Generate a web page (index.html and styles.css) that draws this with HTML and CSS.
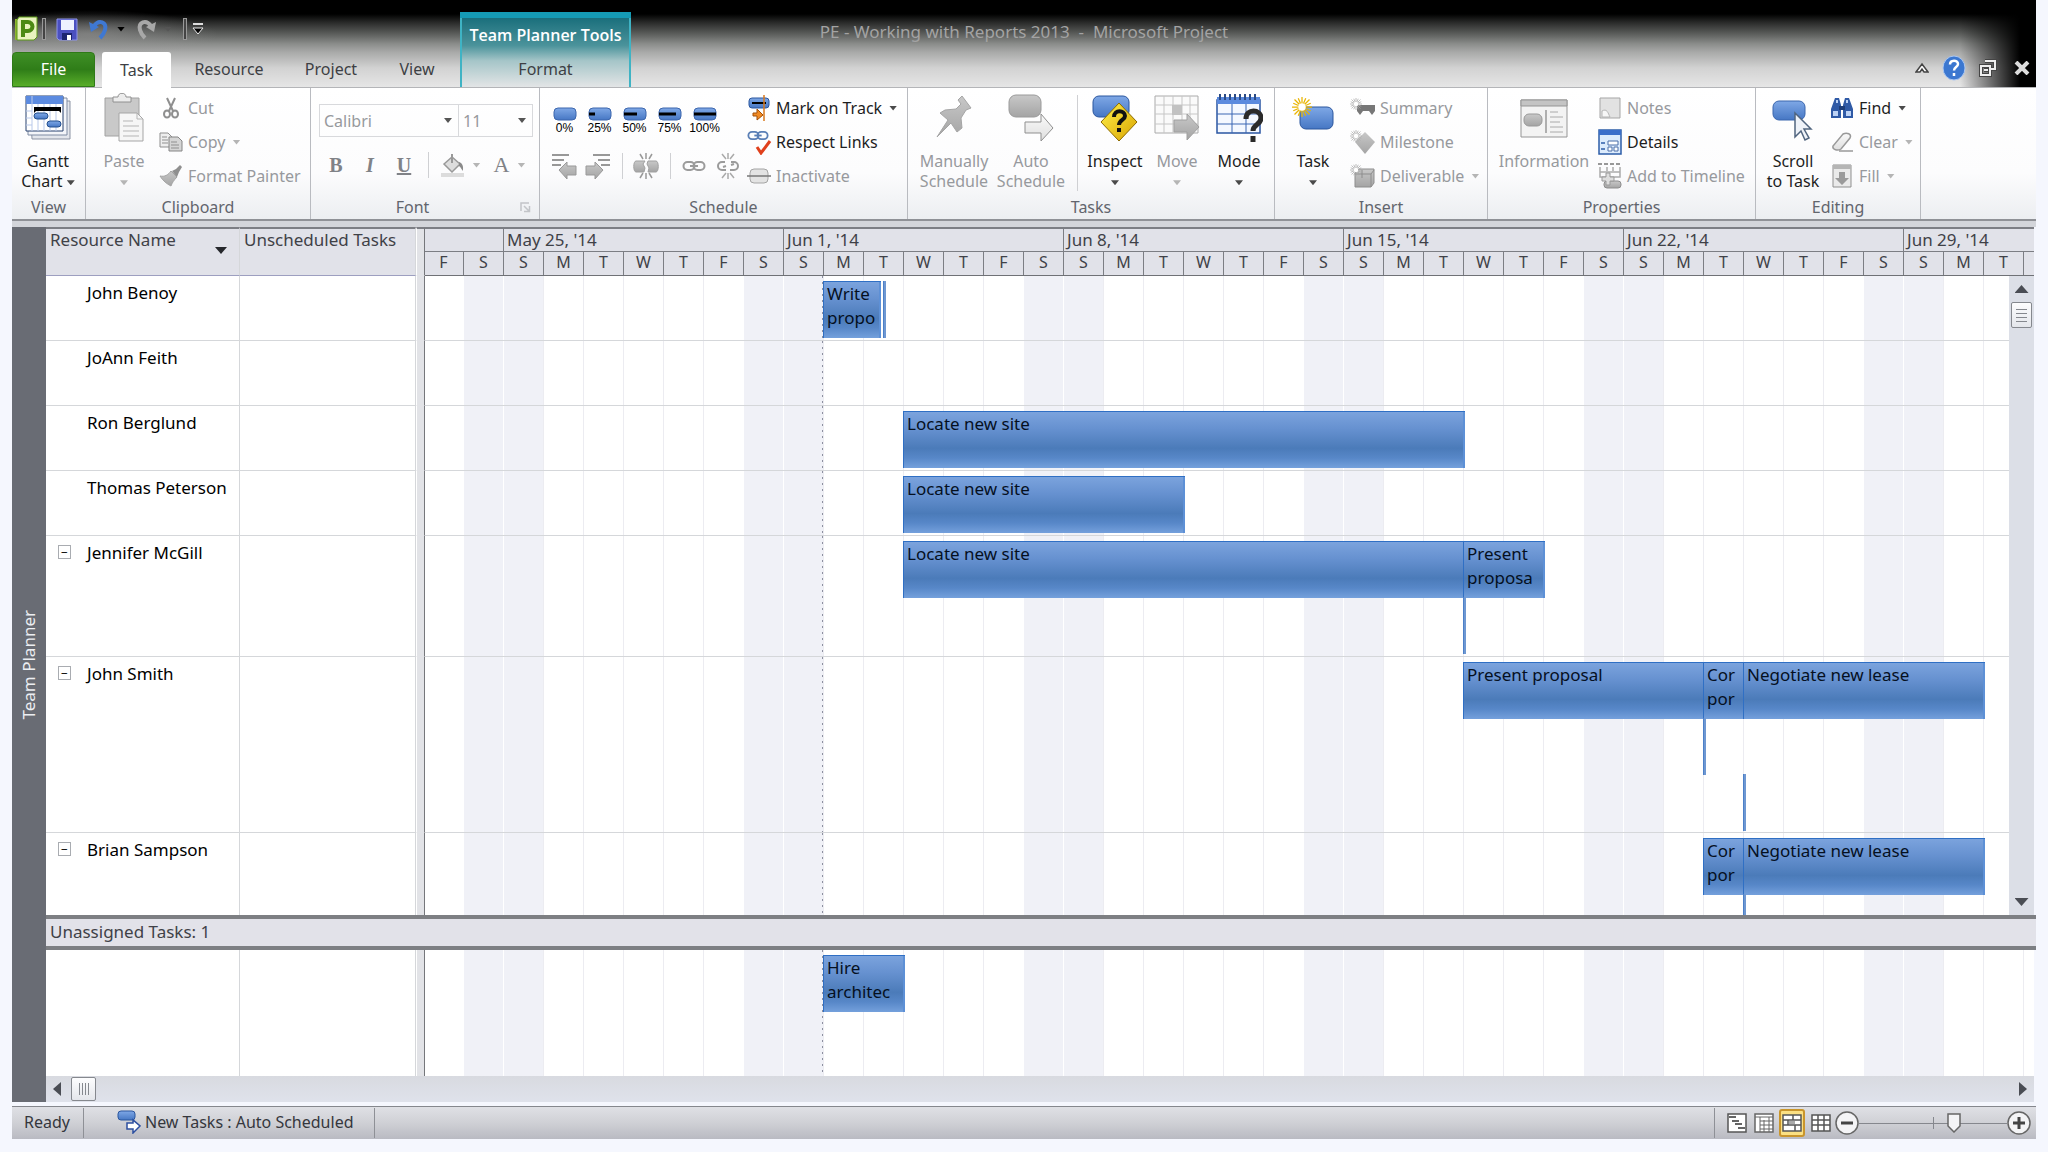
FILE: index.html
```html
<!DOCTYPE html>
<html lang="en">
<head>
<meta charset="utf-8">
<title>PE - Working with Reports 2013 - Microsoft Project</title>
<link rel="stylesheet" href="styles.css">
</head>
<body>
<svg class="defs" aria-hidden="true">
  <defs>
    <linearGradient id="blue" x1="0" y1="0" x2="0" y2="1"><stop offset="0" stop-color="#7fa8e6"/><stop offset="1" stop-color="#4677c4"/></linearGradient>
    <linearGradient id="grey" x1="0" y1="0" x2="0" y2="1"><stop offset="0" stop-color="#c8c8c8"/><stop offset="1" stop-color="#a4a4a4"/></linearGradient>
    <linearGradient id="pale" x1="0" y1="0" x2="0" y2="1"><stop offset="0" stop-color="#fafafa"/><stop offset="1" stop-color="#dedede"/></linearGradient>
    <linearGradient id="gold" x1="0" y1="0" x2="1" y2="1"><stop offset="0" stop-color="#fff04a"/><stop offset="1" stop-color="#d9a400"/></linearGradient>
  </defs>
  <symbol id="spark" viewBox="0 0 16 16"><path d="M8 0v16M0 8h16M2 2l12 12M14 2L2 14M5 1l6 14M11 1L5 15M1 5l14 6M1 11l14-6" stroke="currentColor" stroke-width="1"/><circle cx="8" cy="8" r="3" fill="#fff"/></symbol>
  <symbol id="chain" viewBox="0 0 24 12"><rect x="1.500" y="2" width="11" height="8" rx="4" fill="none" stroke="currentColor" stroke-width="2"/><rect x="11.500" y="2" width="11" height="8" rx="4" fill="none" stroke="currentColor" stroke-width="2"/><path d="M8 6h8" stroke="currentColor" stroke-width="2"/></symbol>
</svg>

<header class="titlebar">
  <div class="quick">
    <svg width="24" height="26" viewBox="0 0 24 26"><rect x="1" y="3" width="20" height="21" fill="#8fb52f"/><path d="M5 1h18v20l-3 3H3V4z" fill="#e9f3bf" stroke="#5c9a16"/><path d="M9 21V6h5a4 4 0 0 1 0 9h-5" fill="none" stroke="#4c8a14" stroke-width="4"/></svg>
    <i class="bar"></i>
    <button aria-label="Save"><svg width="22" height="24" viewBox="0 0 22 24"><path d="M1 2h20v21H3l-2-2z" fill="#4b50c0" stroke="#8d93ea"/><path d="M5 3h13v10H5z" fill="#eef1ff"/><path d="M6 16h10v7H6z" fill="#1d2570"/><path d="M11 18h4v5h-4z" fill="#fff"/></svg></button>
    <button aria-label="Undo"><svg width="20" height="22" viewBox="0 0 20 22"><path d="M5 8C10 1 18 4 16 12c-1 4-3 6-5 8" fill="none" stroke="#3f78d2" stroke-width="4"/><path d="M0 4l2 10 8-5z" fill="#3f78d2"/></svg><i class="caret black"></i></button>
    <button aria-label="Redo"><svg width="20" height="22" viewBox="0 0 20 22"><path d="M15 8C10 1 2 4 4 12c1 4 3 6 5 8" fill="none" stroke="#a8a8a8" stroke-width="4"/><path d="M20 4l-2 10-8-5z" fill="#a8a8a8"/></svg><i class="caret dim"></i></button>
    <i class="bar"></i>
    <button aria-label="Customize Quick Access Toolbar"><svg width="12" height="12" viewBox="0 0 12 12"><path d="M1 1h10" stroke="#ddd" stroke-width="2"/><path d="M1 5h10l-5 6z" fill="#000" stroke="#eee"/></svg></button>
  </div>
  <h1 class="title">PE - Working with Reports 2013 &nbsp;-&nbsp; Microsoft Project</h1>
  <nav class="tabs">
    <button class="tab file">File</button>
    <button class="tab active">Task</button>
    <button class="tab resource">Resource</button>
    <button class="tab project">Project</button>
    <button class="tab view">View</button>
  </nav>
  <div class="context">
    <span class="context-name">Team Planner Tools</span>
    <button class="tab">Format</button>
  </div>
  <div class="controls">
    <button aria-label="Minimize the Ribbon"><svg width="14" height="12" viewBox="0 0 14 12"><path d="M1 10l6-8 6 8H9L7 7l-2 3z" fill="#fff" stroke="#444" stroke-width="1.500"/></svg></button>
    <button aria-label="Help"><svg width="24" height="26" viewBox="0 0 24 26"><ellipse cx="12" cy="13" rx="11" ry="12" fill="#3b77d0" stroke="#a9c6f2"/><path d="M8 9.500c0-5 8-5 8-.5 0 3-4 3-4 6.500M12 18v3" fill="none" stroke="#fff" stroke-width="2.500"/></svg></button>
    <button aria-label="Restore Window"><svg width="18" height="18" viewBox="0 0 18 18"><path d="M6 2h10v8h-4M2 7h9v9H2zM5 11h4" fill="none" stroke="#444" stroke-width="4"/><path d="M6 2h10v8h-4M2 7h9v9H2zM5 11h4" fill="none" stroke="#eee" stroke-width="2"/></svg></button>
    <button aria-label="Close"><svg width="16" height="14" viewBox="0 0 16 14"><path d="M2 1l12 12M14 1L2 13" stroke="#dcdcdc" stroke-width="4"/></svg></button>
  </div>
</header>

<section class="ribbon" aria-label="Ribbon">
  <div class="group g-view">
    <div class="body">
      <button class="big"><svg width="48" height="50" viewBox="0 0 48 50"><path d="M6 8h40v38H8z" fill="#e3e6ec" stroke="#8b93a3"/><path d="M4 5h39v37H4z" fill="#f3f5f9" stroke="#7f8ba3"/><path d="M2 3h37v35H2z" fill="#fff" stroke="#27406f"/><path d="M2 3h37v8H2z" fill="#5c8be0"/><path d="M8 3v35M14 11v27M20 11v27M26 11v27M32 11v27M2 18h6M2 25h6M2 32h6" stroke="#b9c9ea"/><path d="M10 14h27v6l-2-2H12l-2 2z" fill="#000"/><rect x="10" y="20" width="14" height="6" rx="3" fill="url(#blue)" stroke="#24508f"/><rect x="23" y="28" width="14" height="6" rx="3" fill="url(#blue)" stroke="#24508f"/></svg><span>Gantt<br>Chart <i class="caret"></i></span></button>
    </div>
    <h2>View</h2>
  </div>

  <div class="group g-clipboard">
    <div class="body">
      <button class="big off"><svg width="42" height="50" viewBox="0 0 42 50"><path d="M2 5h34v38H2z" fill="#c9c9c9" stroke="#a2a2a2"/><path d="M10 9V4h5c0-5 8-5 8 0h5v5z" fill="#ececec" stroke="#909090"/><path d="M16 20h18l6 6v22H16z" fill="#f6f6f6" stroke="#a5a5a5"/><path d="M34 20v6h6M20 28h10M20 33h16M20 38h16M20 43h16" fill="none" stroke="#b5b5b5"/></svg><span>Paste<br><i class="caret"></i></span></button>
      <div class="stack">
        <button class="small off"><svg width="16" height="22" viewBox="0 0 16 22"><path d="M4 1l6 13M12 1L6 14" stroke="#8f8f8f" stroke-width="2"/><ellipse cx="4" cy="17" rx="3" ry="3.500" fill="none" stroke="#8f8f8f" stroke-width="2"/><ellipse cx="12" cy="17" rx="3" ry="3.500" fill="none" stroke="#8f8f8f" stroke-width="2"/></svg><span>Cut</span></button>
        <button class="small off"><svg width="24" height="20" viewBox="0 0 24 20"><path d="M1 1h8l4 4v10H1z" fill="#eee" stroke="#8f8f8f"/><path d="M10 5h9l4 4v10H10z" fill="#d5d5d5" stroke="#858585"/><path d="M3 5h5M3 8h6M3 11h6M12 10h6M12 13h8M12 16h8" stroke="#8f8f8f"/></svg><span>Copy</span><i class="caret"></i></button>
        <button class="small off"><svg width="24" height="22" viewBox="0 0 24 22"><path d="M1 11c5 1 8-1 11-5l6 6c-3 3-5 6-6 9C8 19 4 16 1 11z" fill="url(#grey)" stroke="#a5a5a5"/><path d="M13 6l4-2 4-4 2 2-3 5-2 5z" fill="#8f8f8f"/></svg><span>Format Painter</span></button>
      </div>
    </div>
    <h2>Clipboard</h2>
  </div>

  <div class="group g-font">
    <div class="body column">
      <div class="pickers">
        <select class="picker family" aria-label="Font"><option>Calibri</option></select>
        <select class="picker size" aria-label="Font Size"><option>11</option></select>
      </div>
      <div class="tools">
        <button class="tool glyph bold">B</button>
        <button class="tool glyph italic">I</button>
        <button class="tool glyph underline">U</button>
        <i class="sep"></i>
        <button class="tool off" aria-label="Background Color"><svg width="24" height="24" viewBox="0 0 24 24"><path d="M3 11l8-7 8 7-8 8z" fill="#ddd" stroke="#999" stroke-width="1.500"/><path d="M11 1v9" stroke="#999" stroke-width="2"/><path d="M18 9c5 2 4 6 4 9-2-2-2-4-4-5z" fill="#8a8a8a"/><path d="M0 20h23v4H0z" fill="#dcdcdc"/></svg><i class="caret"></i></button>
        <button class="tool glyph off fontcolor">A<i class="caret"></i></button>
      </div>
    </div>
    <h2><span>Font</span><button class="launcher" aria-label="Font dialog"><svg width="11" height="11" viewBox="0 0 11 11"><path d="M1 9V1h8M4 4l5 5M9.500 4v5.500H4" fill="none" stroke="#c2c4c8" stroke-width="1.500"/></svg></button></h2>
  </div>

  <div class="group g-schedule">
    <div class="body">
      <div class="progress-tools">
        <div class="percents">
          <button class="percent"><svg width="24" height="14" viewBox="0 0 24 14"><rect x="1" y="1" width="22" height="12" rx="4" fill="url(#blue)" stroke="#3c66ad"/></svg>0%</button>
          <button class="percent"><svg width="24" height="14" viewBox="0 0 24 14"><rect x="1" y="1" width="22" height="12" rx="4" fill="url(#blue)" stroke="#3c66ad"/><path d="M1 7h6" stroke="#000" stroke-width="3"/></svg>25%</button>
          <button class="percent"><svg width="24" height="14" viewBox="0 0 24 14"><rect x="1" y="1" width="22" height="12" rx="4" fill="url(#blue)" stroke="#3c66ad"/><path d="M1 7h13" stroke="#000" stroke-width="3"/></svg>50%</button>
          <button class="percent"><svg width="24" height="14" viewBox="0 0 24 14"><rect x="1" y="1" width="22" height="12" rx="4" fill="url(#blue)" stroke="#3c66ad"/><path d="M1 7h17" stroke="#000" stroke-width="3"/></svg>75%</button>
          <button class="percent"><svg width="24" height="14" viewBox="0 0 24 14"><rect x="1" y="1" width="22" height="12" rx="4" fill="url(#blue)" stroke="#3c66ad"/><path d="M1 7h22" stroke="#000" stroke-width="3"/></svg>100%</button>
        </div>
        <div class="tools">
          <button class="tool" aria-label="Outdent Task"><svg width="26" height="26" viewBox="0 0 26 26"><path d="M1 2h17M1 7h12M1 12h9" stroke="#777" stroke-width="1.500"/><path d="M8 17l8-8v4h9v9h-9v4z" fill="url(#grey)" stroke="#999"/></svg></button>
          <button class="tool" aria-label="Indent Task"><svg width="26" height="26" viewBox="0 0 26 26"><path d="M8 2h17M13 7h12M16 12h9" stroke="#777" stroke-width="1.500"/><path d="M18 17l-8-8v4H1v9h9v4z" fill="url(#grey)" stroke="#999"/></svg></button>
          <i class="sep"></i>
          <button class="tool" aria-label="Split Task"><svg width="26" height="26" viewBox="0 0 26 26"><path d="M7 1l3 5M19 1l-3 5M13 0v6M7 25l3-5M19 25l-3-5M13 26v-6" stroke="#999" stroke-width="1.500"/><path d="M3 8h9l-2 3 2 4-1 4H3c-3 0-3-11 0-11zM23 8h-8l-1 3 2 4-1 4h8c3 0 3-11 0-11z" fill="url(#grey)" stroke="#a0a0a0"/></svg></button>
          <i class="sep"></i>
          <button class="tool" aria-label="Link Tasks"><svg width="24" height="26" viewBox="0 0 24 26" color="#9b9b9b"><use href="#chain" y="7" width="24" height="12"/></svg></button>
          <button class="tool" aria-label="Unlink Tasks"><svg width="24" height="26" viewBox="0 0 24 26"><path d="M9 9H6a4 4 0 0 0 0 8h4M14 17h4a4 4 0 0 0 0-8h-3M10 13l-3 1M15 12l3-1" fill="none" stroke="#9b9b9b" stroke-width="2"/><path d="M6 1l4 5M18 1l-4 5M12 0v6M6 25l4-5M18 25l-4-5M12 26v-6" stroke="#aaa" stroke-width="1.500"/></svg></button>
        </div>
      </div>
      <div class="stack">
        <button class="small"><svg width="22" height="26" viewBox="0 0 22 26"><rect x="1" y="3" width="20" height="10" rx="3" fill="url(#blue)" stroke="#2b569e"/><path d="M4 8h14" stroke="#000" stroke-width="2"/><path d="M16 0v26" stroke="#d9781c" stroke-width="1.500"/><path d="M5 18h4v-4l6 6-6 5v-4H5z" fill="#f08a24" stroke="#a34f06"/></svg><span>Mark on Track</span><i class="caret"></i></button>
        <button class="small"><svg width="24" height="26" viewBox="0 0 24 26" color="#5a7fb6"><use href="#chain" y="1" width="22" height="11"/><path d="M10 18l4 6 9-12" fill="none" stroke="#e0401c" stroke-width="3"/></svg><span>Respect Links</span></button>
        <button class="small off"><svg width="24" height="16" viewBox="0 0 24 16"><rect x="3" y="1" width="18" height="14" rx="4" fill="#e3e3e3" stroke="#a5a5a5"/><path d="M0 8h24" stroke="#777" stroke-width="1.500"/></svg><span>Inactivate</span></button>
      </div>
    </div>
    <h2>Schedule</h2>
  </div>

  <div class="group g-tasks">
    <div class="body">
      <button class="big off w76"><svg width="40" height="50" viewBox="0 0 40 50"><path d="M24 7l4-4 9 12-5 2-5 8 1 10-5 4-6-9-14 14 11-17-8-7 5-3 11-1 5-5z" fill="url(#grey)" stroke="#a5a5a5"/></svg><span>Manually<br>Schedule</span></button>
      <button class="big off w78"><svg width="46" height="50" viewBox="0 0 46 50"><rect x="1" y="2" width="32" height="22" rx="7" fill="url(#grey)" stroke="#9a9a9a"/><path d="M17 29h16v-8l12 14-12 13v-8H17z" fill="url(#pale)" stroke="#8f8f8f"/></svg><span>Auto<br>Schedule</span></button>
      <i class="sep tall"></i>
      <button class="big w62"><svg width="46" height="50" viewBox="0 0 46 50"><rect x="1" y="3" width="36" height="21" rx="6" fill="url(#blue)" stroke="#2b569e"/><path d="M27 10l18 19-18 19L9 29z" fill="url(#gold)" stroke="#8d6b00"/><path d="M22 24c0-8 11-7 11-1 0 4-6 4-6 9M27 35v4" fill="none" stroke="#111" stroke-width="4"/></svg><span>Inspect<br><i class="caret"></i></span></button>
      <button class="big off w62"><svg width="46" height="50" viewBox="0 0 46 50"><path d="M1 3h43v37H1z" fill="#fafafa" stroke="#aaa"/><path d="M10 3v37M19 3v37M28 3v37M36 3v37M1 12h43M1 21h43M1 31h43" stroke="#c6c6c6"/><path d="M18 12h10v10H18z" fill="#c2c2c2"/><path d="M20 27h13v-6l12 13-12 13v-8H20z" fill="url(#grey)" stroke="#a0a0a0"/></svg><span>Move<br><i class="caret"></i></span></button>
      <button class="big w62"><svg width="48" height="50" viewBox="0 0 48 50"><path d="M2 7h43v33H2z" fill="#f4f8ff" stroke="#2a56a2" stroke-width="1.500"/><path d="M2 4h43v7H2z" fill="#5b8ade"/><path d="M5 1v6M10 1v6M15 1v6M20 1v6M25 1v6M30 1v6M35 1v6M40 1v6" stroke="#2a4b86" stroke-width="2"/><path d="M17 11v29M31 11v29M2 21h43M2 31h43" stroke="#3a66b3"/><path d="M31 26c0-11 15-10 15-1 0 7-8 6-8 13M38 43v6" fill="none" stroke="#2a2a2a" stroke-width="5"/></svg><span>Mode<br><i class="caret"></i></span></button>
    </div>
    <h2>Tasks</h2>
  </div>

  <div class="group g-insert">
    <div class="body">
      <button class="big w76"><svg width="42" height="50" viewBox="0 0 42 50"><rect x="8" y="14" width="33" height="22" rx="6" fill="url(#blue)" stroke="#2b569e"/><use href="#spark" x="0" y="4" width="20" height="20" color="#e9b400"/></svg><span>Task<br><i class="caret"></i></span></button>
      <div class="stack">
        <button class="small off"><svg width="26" height="22" viewBox="0 0 26 22" color="#aaa"><path d="M7 8h18v6l-3 4-3-4h-6l-3 4-3-4z" fill="#777"/><use href="#spark" width="12" height="14"/></svg><span>Summary</span></button>
        <button class="small off"><svg width="26" height="26" viewBox="0 0 26 26" color="#aaa"><path d="M15 3l10 10-10 12L5 13z" fill="url(#grey)"/><use href="#spark" width="12" height="14"/></svg><span>Milestone</span></button>
        <button class="small off"><svg width="26" height="26" viewBox="0 0 26 26" color="#aaa"><path d="M5 10l4-4h15v14l-3 4H5z" fill="url(#grey)" stroke="#8d8d8d"/><path d="M5 11h16v13M21 11l3-4M12 7v8" fill="none" stroke="#8d8d8d"/><use href="#spark" width="12" height="14"/></svg><span>Deliverable</span><i class="caret"></i></button>
      </div>
    </div>
    <h2>Insert</h2>
  </div>

  <div class="group g-properties">
    <div class="body">
      <button class="big off w106"><svg width="48" height="50" viewBox="0 0 48 50"><path d="M1 7h46v37H1z" fill="#f3f3f3" stroke="#959595"/><path d="M1 7h46v6H1z" fill="#c4c4c4" stroke="#959595"/><rect x="4" y="21" width="18" height="12" rx="5" fill="url(#grey)" stroke="#999"/><path d="M26 17v23" stroke="#999" stroke-width="1.500"/><path d="M30 19h8M30 24h13M30 29h10M30 34h13M30 39h13" stroke="#aaa"/></svg><span>Information</span></button>
      <div class="stack">
        <button class="small off"><svg width="22" height="22" viewBox="0 0 22 22"><path d="M1 1h20v20H1z" fill="#e2e2e2" stroke="#a5a5a5"/><path d="M3 14c5-3 6 2 8 6H3z" fill="#f7f7f7" stroke="#b5b5b5"/></svg><span>Notes</span></button>
        <button class="small"><svg width="24" height="26" viewBox="0 0 24 26"><path d="M1 1h22v24H1z" fill="#dcebfc" stroke="#2d5da8" stroke-width="1.500"/><path d="M1 1h22v5H1z" fill="#3b6fca"/><path d="M3 14h4M3 20h4" stroke="#2d5da8" stroke-width="1.500"/><path d="M10 12h10v4H10zM10 18h4v4h-4zM16 18h4v4h-4z" fill="#fff" stroke="#4a6fa8"/></svg><span>Details</span></button>
        <button class="small off"><svg width="24" height="26" viewBox="0 0 24 26"><path d="M0 1h24" stroke="#777" stroke-width="1.500" stroke-dasharray="4 2"/><path d="M2 4v10h20V4M2 9h20M9 4v4M15 4v4" fill="none" stroke="#aaa" stroke-width="1.500"/><rect x="6" y="18" width="17" height="7" rx="3" fill="url(#grey)" stroke="#8d8d8d"/><path d="M8 10h4v4h4v4h-4v4H8v-4H4v-4h4z" fill="#ddd" stroke="#999"/></svg><span>Add to Timeline</span></button>
      </div>
    </div>
    <h2>Properties</h2>
  </div>

  <div class="group g-editing">
    <div class="body">
      <button class="big w72"><svg width="42" height="50" viewBox="0 0 42 50"><rect x="1" y="8" width="32" height="19" rx="6" fill="url(#blue)" stroke="#3a66ae"/><path d="M23 20l16 16h-7l5 9-4 2-4-9-6 6z" fill="#eef2f8" stroke="#51657f" stroke-width="1.500"/></svg><span>Scroll<br>to Task</span></button>
      <div class="stack">
        <button class="small"><svg width="24" height="22" viewBox="0 0 24 22"><path d="M5 1h4l2 7v13H1V12zM15 1h4l4 11v9H13V8z" fill="#2f5aa6"/><path d="M9 9h6v4H9z" fill="#1d3d78"/><path d="M3 14h5v5H3zM16 14h5v5h-5zM6 3h2v3H6zM16 3h2v3h-2z" fill="#bcd2f5"/></svg><span>Find</span><i class="caret"></i></button>
        <button class="small off"><svg width="22" height="20" viewBox="0 0 22 20"><path d="M12 2c4-2 9 0 7 4l-9 11c-3 2-9 1-8-3z" fill="url(#pale)" stroke="#999" stroke-width="1.500"/><path d="M8 19h14" stroke="#999" stroke-width="1.500"/></svg><span>Clear</span><i class="caret"></i></button>
        <button class="small off"><svg width="20" height="24" viewBox="0 0 20 24"><path d="M1 1h18v22H1z" fill="#eaeaea" stroke="#8f8f8f"/><path d="M1 1h18v4H1z" fill="#b5b5b5"/><path d="M7 8h6v6h4l-7 7-7-7h4z" fill="#9a9a9a"/></svg><span>Fill</span><i class="caret"></i></button>
      </div>
    </div>
    <h2>Editing</h2>
  </div>
</section>

<main class="workspace">
  <div class="side"><span>Team Planner</span></div>
  <div class="planner">
    <div class="pane upper">
      <table class="sheet">
        <colgroup><col class="c-name"><col class="c-unsched"><col class="c-split"><col></colgroup>
        <thead>
          <tr>
            <th class="name"><div class="headname">Resource Name<i class="caret sort"></i></div></th>
            <th class="unsched">Unscheduled Tasks</th>
            <td class="split"></td>
            <th class="time">
              <div class="scale months"><span class="lead"></span><span>May 25, '14</span><span>Jun 1, '14</span><span>Jun 8, '14</span><span>Jun 15, '14</span><span>Jun 22, '14</span><span>Jun 29, '14</span></div>
              <div class="scale days"><span>F</span><span>S</span><span>S</span><span>M</span><span>T</span><span>W</span><span>T</span><span>F</span><span>S</span><span>S</span><span>M</span><span>T</span><span>W</span><span>T</span><span>F</span><span>S</span><span>S</span><span>M</span><span>T</span><span>W</span><span>T</span><span>F</span><span>S</span><span>S</span><span>M</span><span>T</span><span>W</span><span>T</span><span>F</span><span>S</span><span>S</span><span>M</span><span>T</span><span>W</span><span>T</span><span>F</span><span>S</span><span>S</span><span>M</span><span>T</span><span></span></div>
            </th>
          </tr>
        </thead>
        <tbody>
          <tr>
            <td class="name">John Benoy</td><td class="unsched"></td><td class="split"></td>
            <td class="lane"><div class="task" style="--d:10;--w:1.4">Write<br>propo</div><div class="tail" style="--d:11.5;--s:0"></div></td>
          </tr>
          <tr>
            <td class="name">JoAnn Feith</td><td class="unsched"></td><td class="split"></td>
            <td class="lane"></td>
          </tr>
          <tr>
            <td class="name">Ron Berglund</td><td class="unsched"></td><td class="split"></td>
            <td class="lane"><div class="task" style="--d:12;--w:14">Locate new site</div></td>
          </tr>
          <tr>
            <td class="name">Thomas Peterson</td><td class="unsched"></td><td class="split"></td>
            <td class="lane"><div class="task" style="--d:12;--w:7">Locate new site</div></td>
          </tr>
          <tr class="two">
            <td class="name"><button class="toggle" aria-label="Collapse">−</button>Jennifer McGill</td><td class="unsched"></td><td class="split"></td>
            <td class="lane"><div class="task" style="--d:12;--w:14">Locate new site</div><div class="task" style="--d:26;--w:2">Present<br>proposa</div><div class="tail" style="--d:26;--s:1"></div></td>
          </tr>
          <tr class="three">
            <td class="name"><button class="toggle" aria-label="Collapse">−</button>John Smith</td><td class="unsched"></td><td class="split"></td>
            <td class="lane"><div class="task" style="--d:26;--w:6">Present proposal</div><div class="task" style="--d:32;--w:1">Cor<br>por</div><div class="task" style="--d:33;--w:6">Negotiate new lease</div><div class="tail" style="--d:32;--s:1"></div><div class="tail" style="--d:33;--s:2"></div></td>
          </tr>
          <tr class="three">
            <td class="name"><button class="toggle" aria-label="Collapse">−</button>Brian Sampson</td><td class="unsched"></td><td class="split"></td>
            <td class="lane"><div class="task" style="--d:32;--w:1">Cor<br>por</div><div class="task" style="--d:33;--w:6">Negotiate new lease</div><div class="tail" style="--d:33;--s:1"></div></td>
          </tr>
        </tbody>
      </table>
      <div class="vscroll">
        <button aria-label="Scroll up"><i class="arrow up"></i></button>
        <div class="thumb"><i></i><i></i><i></i><i></i></div>
        <button class="last" aria-label="Scroll down"><i class="arrow down"></i></button>
      </div>
    </div>
    <div class="divider">Unassigned Tasks: 1</div>
    <div class="pane lower">
      <table class="sheet">
        <colgroup><col class="c-name"><col class="c-unsched"><col class="c-split"><col></colgroup>
        <tbody>
          <tr class="two">
            <td class="name"></td><td class="unsched"></td><td class="split"></td>
            <td class="lane"><div class="task" style="--d:10;--w:2">Hire<br>architec</div></td>
          </tr>
        </tbody>
      </table>
    </div>
    <div class="hscroll">
      <button aria-label="Scroll left"><i class="arrow left"></i></button>
      <div class="thumb"><i></i><i></i><i></i><i></i></div>
      <button class="last" aria-label="Scroll right"><i class="arrow right"></i></button>
    </div>
  </div>
</main>

<footer class="status">
  <span class="ready">Ready</span>
  <button class="newtasks"><svg width="24" height="24" viewBox="0 0 24 24"><rect x="1" y="1" width="17" height="9" rx="3" fill="url(#blue)" stroke="#2b569e"/><path d="M10 13h6v-3l7 6-7 7v-4h-6z" fill="#fff" stroke="#2c4fa0" stroke-width="1.500"/></svg>New Tasks : Auto Scheduled</button>
  <div class="views">
    <button aria-label="Gantt Chart"><svg width="20" height="20" viewBox="0 0 20 20"><path d="M1 1h18v18H1z" fill="#fff" stroke="#555" stroke-width="1.500"/><path d="M2 4h7M5 8h7M8 11h7M11 15h7" stroke="#333" stroke-width="1.500"/></svg></button>
    <button aria-label="Task Usage"><svg width="20" height="20" viewBox="0 0 20 20"><path d="M1 1h18v18H1z" fill="#fff" stroke="#666" stroke-width="1.500"/><path d="M1 4h18M6 4v15M10 7v12M15 4v15M6 8h13M6 12h13M6 16h13" stroke="#666"/></svg></button>
    <button class="on" aria-label="Team Planner"><svg width="20" height="18" viewBox="0 0 20 18"><path d="M1 1h18v16H1z" fill="#fff" stroke="#555" stroke-width="1.500"/><path d="M1 6h18M1 11h18M11 1v5M6 6v5M13 11v6" stroke="#555" stroke-width="1.500"/><path d="M7 7h6v3H7z" fill="#aaa"/></svg></button>
    <button aria-label="Resource Sheet"><svg width="20" height="18" viewBox="0 0 20 18"><path d="M1 1h18v16H1zM1 6h18M1 11h18M7 1v16M13 1v16" fill="#fff" stroke="#555" stroke-width="1.500"/></svg></button>
  </div>
  <div class="zoom">
    <button aria-label="Zoom out"><svg width="24" height="24" viewBox="0 0 24 24"><circle cx="12" cy="12" r="11" fill="#f4f4f6" stroke="#666" stroke-width="1.500"/><path d="M6 12h12" stroke="#444" stroke-width="3"/></svg></button>
    <input type="range" aria-label="Zoom" min="0" max="100" value="66">
    <button aria-label="Zoom in"><svg width="24" height="24" viewBox="0 0 24 24"><circle cx="12" cy="12" r="11" fill="#f4f4f6" stroke="#666" stroke-width="1.500"/><path d="M6 12h12M12 6v12" stroke="#444" stroke-width="3"/></svg></button>
  </div>
</footer>
</body>
</html>
```
FILE: styles.css
```css
* { box-sizing: border-box; }

body {
  margin: 0;
  padding: 0 12px 13px;
  height: 100vh;
  display: flex;
  flex-direction: column;
  background: #f5f7fe;
  color: #1e1e1e;
  font: 16px/20px "Noto Sans", "Open Sans", sans-serif;
  overflow: hidden;
}

button, select, input {
  margin: 0;
  padding: 0;
  border: 0;
  background: none;
  color: inherit;
  font: inherit;
}

svg { display: block; flex: none; }
h1, h2 { margin: 0; font: inherit; }
.defs { position: absolute; width: 0; height: 0; }

.caret {
  display: inline-block;
  width: 8px;
  height: 5px;
  background: #4a4a4a;
  clip-path: polygon(0 0, 100% 0, 50% 100%);
  vertical-align: middle;
  flex: none;
}
.off .caret { background: #b5b5b5; }

/* Title bar */
.titlebar {
  flex: none;
  display: grid;
  grid-template-columns: 448px 171px 1fr;
  grid-template-rows: 52px 35px;
  border-bottom: 1px solid #b4b5b8;
  background:
    linear-gradient(to left, #000 16px, transparent 76px),
    radial-gradient(ellipse 130px 24px at 76px 34px, rgba(150, 150, 150, .6), transparent),
    linear-gradient(#000 14px, #2c2d2c 23px, #5c5e5c 34px, #8b8d8b 44px, #a8a9a8 52px, #d2d2d2 68px, #e6e6e6 87px);
}
.quick {
  grid-area: 1 / 1;
  display: flex;
  align-items: center;
  padding: 6px 0 0 2px;
}
.quick .bar {
  width: 4px;
  height: 22px;
  border: 1px solid #999;
  background: #444;
  margin: 0 10px 0 4px;
}
.quick button { display: flex; align-items: center; margin-right: 11px; gap: 8px; }
.quick button + .bar { margin: 0 5px 0 0; }
.quick .black { background: #000; }
.quick .dim { background: #555; }
.title {
  grid-area: 1 / 1 / 2 / 4;
  text-align: center;
  font-size: 17px;
  line-height: 24px;
  padding-top: 20px;
  color: #a3a3a3;
  pointer-events: none;
}
.tabs { grid-area: 2 / 1; display: flex; }
.tab { height: 35px; padding-bottom: 1px; color: #3d3f44; text-align: center; }
.file {
  width: 83px;
  margin-right: 7px;
  border: 1px solid #2f7a17;
  border-radius: 4px 4px 0 0;
  background: linear-gradient(#3f8f26, #2f7d18 50%, #58ad29);
  color: #fff;
}
.active { width: 69px; height: 36px; border-radius: 3px 3px 0 0; background: #fff; }
.resource { width: 116px; }
.project { width: 88px; }
.view { width: 84px; }
.context {
  grid-area: 1 / 2 / 3 / 3;
  margin-top: 12px;
  display: flex;
  flex-direction: column;
  border-top: 6px solid #159bb5;
  background: linear-gradient(to right, #3fb3c4 2px, transparent 2px calc(100% - 2px), #3fb3c4 calc(100% - 2px)), linear-gradient(#1a6f7c, #4b939b 40%, #a5c5c8 62%, #e3e5e6);
}
.context-name { height: 34px; line-height: 34px; text-align: center; color: #fff; font-weight: 600; font-family: "Open Sans", "Noto Sans", sans-serif; }
.controls {
  grid-area: 2 / 3;
  display: flex;
  justify-content: flex-end;
  align-items: center;
  gap: 13px;
  padding: 0 6px 4px 0;
}
.controls button:last-child { margin-left: 4px; }

/* Ribbon */
.ribbon {
  flex: none;
  display: flex;
  height: 133px;
  border-bottom: 2px solid #8f9196;
  background: linear-gradient(#fff, #fcfcfd 65%, #eceef1);
}
.group {
  flex: none;
  display: flex;
  flex-direction: column;
  border-right: 1px solid #b9bbc0;
}
.group h2 { height: 24px; line-height: 24px; text-align: center; color: #62656d; }
.body { flex: 1; display: flex; align-items: flex-start; padding-top: 3px; }
.body.column { flex-direction: column; }
.g-view { width: 74px; }
.g-clipboard { width: 225px; }
.g-clipboard .body { padding-left: 4px; }
.g-font { width: 229px; }
.g-font .body { padding: 16px 0 0 8px; }
.g-schedule { width: 368px; }
.g-schedule .body { padding-left: 7px; }
.g-tasks { width: 367px; }
.g-tasks .body { padding-left: 8px; }
.g-insert { width: 213px; }
.g-insert .body { padding-left: 1px; }
.g-properties { width: 268px; }
.g-properties .body { padding-left: 3px; }
.g-editing { width: 165px; }
.g-editing .body { padding-left: 1px; }

.big {
  width: 72px;
  padding-top: 2px;
  display: flex;
  flex-direction: column;
  align-items: center;
  gap: 8px;
  white-space: nowrap;
}
.g-clipboard .big { width: 68px; }
.w76 { width: 76px; }
.w78 { width: 78px; }
.w62 { width: 62px; }
.w72 { width: 72px; }
.w106 { width: 106px; }
.g-insert .w76 { width: 74px; }
.off { color: #97999d; }

.stack { display: flex; flex-direction: column; }
.small { height: 34px; display: flex; align-items: center; white-space: nowrap; }
.small svg { width: 26px; margin-right: 4px; }
.small .caret { margin-left: 7px; }

.pickers { display: flex; }
.picker {
  appearance: none;
  height: 33px;
  padding: 0 4px;
  border: 1px solid #d8d9dc;
  color: #97999d;
  background: url("data:image/svg+xml,%3Csvg xmlns='http://www.w3.org/2000/svg' width='8' height='5'%3E%3Cpath d='M0 0h8L4 5z' fill='%23555'/%3E%3C/svg%3E") no-repeat right 6px center;
}
.family { width: 140px; }
.size { width: 74px; border-left: 0; }
.tools { display: flex; align-items: center; height: 30px; }
.g-font .tools { margin-top: 13px; }
.tool { width: 34px; height: 30px; display: flex; justify-content: center; align-items: center; }
.tool .caret { margin-left: 8px; }
.g-font .tool:has(.caret) { width: 49px; padding-left: 2px; }
.glyph { font: 20px/30px "Liberation Serif", serif; color: #808287; }
.bold { font-weight: 700; }
.italic { font-style: italic; font-weight: 700; }
.underline { text-decoration: underline; font-weight: 700; }
.fontcolor { font-size: 22px; }
.sep { width: 14px; height: 26px; background: linear-gradient(#cfd0d3, #cfd0d3) no-repeat center / 1px 100%; }
.tall { flex: none; width: 14px; height: 96px; margin-top: 4px; }
.g-font h2 { display: grid; grid-template-columns: 1fr 11px; align-items: center; padding: 0 8px; }
.g-font h2 span { padding-right: 14px; }

.progress-tools { flex: none; width: 199px; padding-top: 16px; }
.percents { display: flex; }
.percent { width: 35px; display: flex; flex-direction: column; align-items: center; font: 12px/14px "Liberation Sans", sans-serif; color: #000; }
.progress-tools .tools { margin-top: 16px; }

/* Planner */
.workspace {
  flex: 1;
  min-height: 0;
  display: flex;
  border-top: 6px solid #d3d5da;
}
.side {
  flex: none;
  width: 34px;
  margin-bottom: 4px;
  display: flex;
  align-items: center;
  justify-content: center;
  background: #696c74;
  color: #eceef2;
  font-size: 17px;
}
.side span { writing-mode: vertical-rl; transform: rotate(180deg); }
.planner { flex: 1; min-width: 0; display: flex; flex-direction: column; padding: 0 2px 4px 0; font-size: 17px; }
.pane { position: relative; overflow: hidden; background: #fff; }
.upper { flex: 1; min-height: 0; }
.lower { flex: none; height: 126px; }

.sheet { width: 100%; table-layout: fixed; border-collapse: separate; border-spacing: 0; line-height: 25px; }
.lower .sheet { height: 100%; }
.c-name { width: 194px; }
.c-unsched { width: 176px; }
.c-split { width: 9px; }
.sheet th, .sheet td { padding: 0; font-weight: 400; text-align: left; vertical-align: top; }
thead th, thead .split { height: 49px; border-top: 2px solid #7c7e84; border-bottom: 1px solid #9d9fc0; background: #e1e2e9; color: #3f4147; }
.sheet thead .unsched, .sheet thead .name { padding-left: 4px; line-height: 22px; }
.headname { display: flex; justify-content: space-between; padding-right: 12px; }
.sort { width: 12px; height: 7px; background: #26282c; margin-top: 18px; }
tbody td { height: 65px; border-bottom: 1px solid #d5d7da; }
.lower td { border-bottom: 0; }
.two td { height: 121px; }
.three td { height: 176px; }
.name, .unsched { border-right: 1px solid #d5d7da; }
.sheet tbody .name { padding: 4px 0 0 41px; color: #000; }
.toggle {
  float: left;
  width: 13px;
  height: 14px;
  margin: 5px 0 0 -29px;
  border: 1px solid #a9acb1;
  background: #fff;
  color: #000;
  font-size: 12px;
  line-height: 11px;
}
.sheet .split { background: #e2e3e7; border-right: 1px solid #75777b; border-bottom-color: #e2e3e7; border-left: 1px solid #fff; }

/* Timeline: one day is 40px, the first day starts 2px before the edge */
.sheet .time { overflow: hidden; border-bottom-color: #6f7176; }
.scale { display: flex; margin-left: -2px; height: 23px; line-height: 21px; }
.scale span { flex: none; border-left: 1px solid #7c7e84; }
.months span { width: 280px; padding-left: 3px; border-bottom: 1px solid #7c7e84; }
.months .lead { width: 80px; }
.days span { width: 40px; text-align: center; font-size: 16px; }
.lane {
  position: relative;
  overflow: hidden;
  background:
    linear-gradient(#8d90a0 2px, transparent 2px) 397px 0 / 1px 6px repeat-y,
    linear-gradient(to right, #fff 1px, transparent 1px) 38px 0 / 280px 100%,
    linear-gradient(to right, #fff 1px, transparent 1px) 78px 0 / 280px 100%,
    linear-gradient(to right, transparent 40px, #f0f1f7 40px 120px, transparent 120px) -2px 0 / 280px 100%,
    linear-gradient(to right, #ececf1 1px, #fff 1px) -2px 0 / 40px 100%;
}
.task, .tail {
  position: absolute;
  left: calc(var(--d) * 40px - 2px);
  height: 57px;
}
.task {
  top: 5px;
  width: calc(var(--w) * 40px + 2px);
  padding-left: 3px;
  overflow: hidden;
  white-space: nowrap;
  color: #05101f;
  line-height: 24px;
  border: solid #2f6fc4;
  border-width: 1px 0 0 1px;
  background: linear-gradient(#7ba3dd, #6691d0 30%, #4b7bb9 65%, #5787c8 82%, #74a0dc);
  box-shadow: inset -2px 0 0 #5d90d6;
}
.tail { top: calc(5px + var(--s) * 56px); width: 3px; background: #6f98d2; border-left: 1px solid #4c80c8; }

.divider {
  flex: none;
  height: 35px;
  padding-left: 4px;
  line-height: 26px;
  border: solid #7d7f83;
  border-width: 4px 0;
  margin-right: -2px;
  background: #e2e2e9;
  color: #3f4147;
}

/* Scroll bars */
.arrow { display: block; background: #4a4d54; }
.up, .down { width: 14px; height: 8px; }
.left, .right { width: 8px; height: 14px; }
.up { clip-path: polygon(50% 0, 100% 100%, 0 100%); }
.down { clip-path: polygon(0 0, 100% 0, 50% 100%); }
.left { clip-path: polygon(100% 0, 100% 100%, 0 50%); }
.right { clip-path: polygon(0 0, 100% 50%, 0 100%); }
.vscroll {
  position: absolute;
  top: 49px;
  right: 0;
  bottom: 0;
  width: 25px;
  display: flex;
  flex-direction: column;
  align-items: center;
  background: #dcdfe7;
  padding: 9px 0;
}
.last { margin-top: auto; }
.thumb { display: flex; justify-content: center; align-items: center; gap: 2px; border: 1px solid #85888e; border-radius: 2px; background: linear-gradient(#fdfdfe, #e4e6eb); }
.thumb i { background: #85888e; }
.vscroll .thumb { flex-direction: column; gap: 3px; width: 21px; height: 26px; margin-top: 9px; }
.vscroll .thumb i { width: 11px; height: 1px; }
.hscroll { flex: none; height: 26px; display: flex; align-items: center; padding: 0 7px; background: linear-gradient(#d8dae0, #dfe2eb); }
.hscroll .thumb { width: 25px; height: 24px; margin-left: 10px; }
.hscroll .thumb i { width: 1px; height: 12px; }
.hscroll .last { margin: 0 0 0 auto; }

/* Status bar */
.status {
  flex: none;
  height: 33px;
  display: flex;
  align-items: center;
  border-top: 1px solid #85878d;
  background: linear-gradient(#dfe0e5, #cfd0d5 50%, #b9bac2);
  color: #35373d;
}
.ready { width: 72px; height: 30px; line-height: 28px; padding-left: 12px; border-right: 1px solid #8e9096; }
.newtasks { height: 30px; display: flex; align-items: center; gap: 4px; padding: 0 20px 2px 33px; border-right: 1px solid #8e9096; }
.views { display: flex; align-items: center; gap: 4px; height: 30px; margin-left: auto; padding-left: 10px; border-left: 1px solid #8e9096; }
.views button { width: 23px; height: 28px; display: flex; align-items: center; justify-content: center; }
.views .on { width: 26px; border: 2px solid #c9952b; border-radius: 3px; background: #fbe083; }
.zoom { display: flex; align-items: center; padding: 0 5px 0 3px; }
.zoom input {
  appearance: none;
  width: 148px;
  height: 24px;
  background: linear-gradient(#85878d, #85878d) no-repeat 74px center / 1px 12px, linear-gradient(#85878d, #85878d) no-repeat center / 100% 1px;
}
.zoom input::-webkit-slider-thumb {
  appearance: none;
  width: 14px;
  height: 20px;
  background: url("data:image/svg+xml,%3Csvg xmlns='http://www.w3.org/2000/svg' width='14' height='20'%3E%3Cpath d='M1 1h12v12l-6 6-6-6z' fill='%23f4f4f6' stroke='%23666' stroke-width='1.500'/%3E%3C/svg%3E");
}
```
